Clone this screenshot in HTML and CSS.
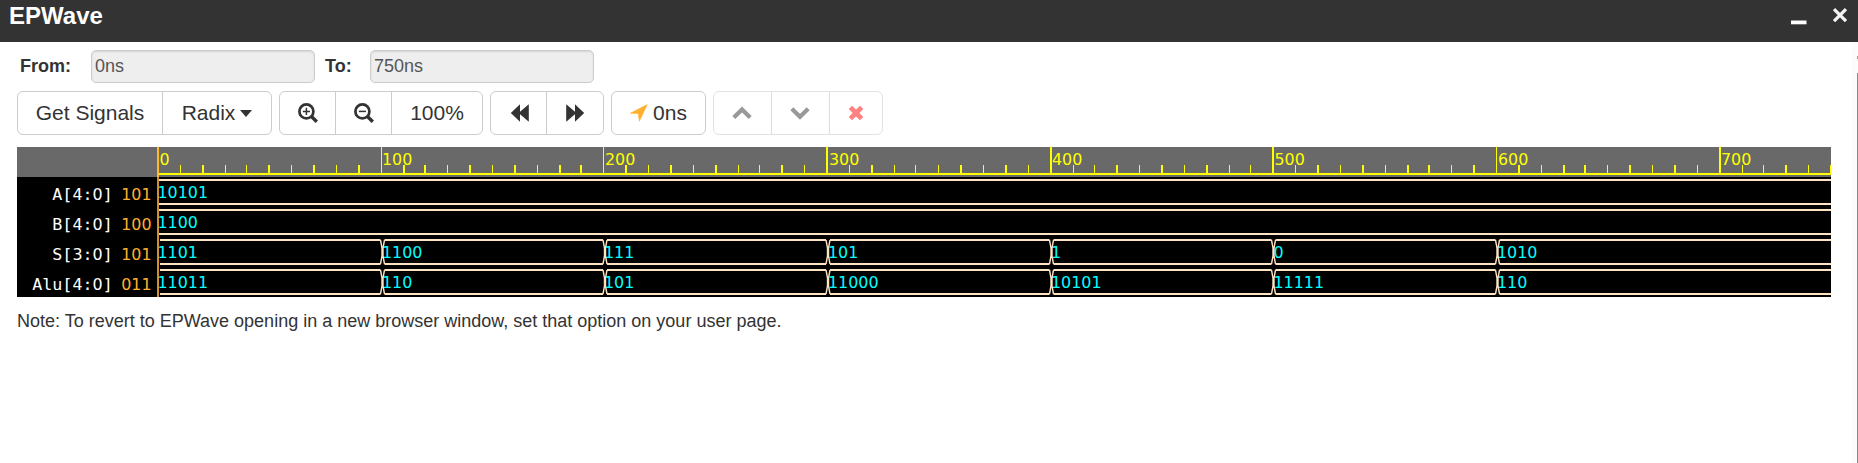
FILE: index.html
```html
<!DOCTYPE html>
<html lang="en">
<head>
<meta charset="utf-8">
<title>EPWave</title>
<link rel="stylesheet" href="styles.css">
</head>
<body>
<header class="titlebar">
  <h1 class="title">EPWave</h1>
  <svg class="window-icons" width="64" height="28" viewBox="0 0 64 28">
    <rect x="1" y="20.5" width="15.5" height="3.8" fill="#fff"/>
    <path d="M44 9.2L56 21.2M56 9.2L44 21.2" stroke="#f4f4f4" stroke-width="3.2"/>
  </svg>
</header>
<main class="content">
  <form class="range">
    <label class="from-label" for="from">From:</label>
    <input id="from" class="field" value="0ns" disabled>
    <label class="to-label" for="to">To:</label>
    <input id="to" class="field" value="750ns" disabled>
  </form>
  <div class="toolbar">
    <div class="group">
      <button class="btn w-signals">Get Signals</button>
      <button class="btn w-radix">Radix<span class="caret"></span></button>
    </div>
    <div class="group">
      <button class="btn w-zin"><svg width="20" height="20" viewBox="0 0 20 20"><circle cx="8.4" cy="8.4" r="7" fill="none" stroke="#333" stroke-width="2.7"/><path d="M13.2 13.2L18.8 18.8" stroke="#333" stroke-width="3.4"/><path d="M4.8 8.4H12M8.4 4.8V12" stroke="#333" stroke-width="1.5"/></svg></button>
      <button class="btn w-zout"><svg width="20" height="20" viewBox="0 0 20 20"><circle cx="8.4" cy="8.4" r="7" fill="none" stroke="#333" stroke-width="2.7"/><path d="M13.2 13.2L18.8 18.8" stroke="#333" stroke-width="3.4"/><path d="M4.8 8.4H12" stroke="#333" stroke-width="1.5"/></svg></button>
      <button class="btn w-pct">100%</button>
    </div>
    <div class="group">
      <button class="btn w-back"><svg class="nudge" width="20" height="18" viewBox="0 0 20 18"><path d="M0.8 9L10 0.3V7.8L18.8 0.3V17.7L10 10.2V17.7Z" fill="#333"/></svg></button>
      <button class="btn w-fwd"><svg class="pull" width="20" height="18" viewBox="0 0 20 18"><path d="M19.2 9L10 0.3V7.8L1.2 0.3V17.7L10 10.2V17.7Z" fill="#333"/></svg></button>
    </div>
    <div class="group">
      <button class="btn w-cursor"><svg class="arrow" width="18" height="18" viewBox="0 0 18 18"><path d="M17.2 0.6L9.4 17.2L8.2 9.4L0.4 9.2Z" fill="#ffb02e" stroke="#ffb02e" stroke-width=".6" stroke-linejoin="round"/></svg>0ns</button>
    </div>
    <div class="group group-disabled">
      <button class="btn w-up"><svg class="pull" width="20" height="14" viewBox="0 0 20 14"><path d="M1.8 11.4L10 3.4L18.2 11.4" fill="none" stroke="#999" stroke-width="4.2"/></svg></button>
      <button class="btn w-down"><svg class="pull" width="20" height="14" viewBox="0 0 20 14"><path d="M1.8 2.8L10 10.8L18.2 2.8" fill="none" stroke="#999" stroke-width="4.2"/></svg></button>
      <button class="btn w-remove"><svg class="pull" width="16" height="16" viewBox="0 0 16 16"><path d="M2.4 2.4L13.6 13.6M13.6 2.4L2.4 13.6" stroke="#ff8080" stroke-width="4.8"/></svg></button>
    </div>
  </div>
  <svg class="waves" id="waves" width="1814" height="150" viewBox="17 147 1814 150"></svg>
  <p class="note">Note: To revert to EPWave opening in a new browser window, set that option on your user page.</p>
</main>
<div class="scrollbar"></div>
<script src="waves.js"></script>
</body>
</html>
```
FILE: styles.css
```css
* { box-sizing: border-box; }
body {
  margin: 0;
  height: 463px;
  overflow: hidden;
  background: #fff;
  color: #333;
  font: 18px/25px "Liberation Sans", Arial, sans-serif;
}
.titlebar {
  display: flex;
  justify-content: space-between;
  height: 42px;
  padding: 0 4px 0 9px;
  background: #333;
  color: #fff;
}
.title { margin: 0; font-size: 24px; line-height: 31px; font-weight: bold; }
.window-icons { display: block; }
.content { padding: 8px 27px 0 17px; }
.range { display: flex; height: 33px; margin: 0; align-items: center; }
.range label { font-weight: bold; line-height: 30px; height: 32px; }
.from-label { width: 74px; padding-left: 3px; }
.to-label { width: 55px; padding-left: 10px; }
.field {
  width: 224px;
  height: 33px;
  margin: 0;
  padding: 0 3px 1px;
  border: 1px solid #ccc;
  border-radius: 5px;
  background: #eee;
  color: #555;
  font: 18px/25px "Liberation Sans", Arial, sans-serif;
  box-shadow: inset 0 1px 2px rgba(0, 0, 0, .1);
}
.toolbar { display: flex; gap: 7px; margin-top: 8px; height: 44px; }
.group { display: flex; border: 1px solid #ccc; border-radius: 6px; }
.group-disabled { border-color: #e3e3e3; }
.btn {
  display: flex;
  align-items: center;
  justify-content: center;
  height: 42px;
  padding: 0;
  border: 0;
  background: none;
  color: #333;
  font: 21px/42px "Liberation Sans", Arial, sans-serif;
  white-space: nowrap;
}
.btn + .btn { border-left: 1px solid #ccc; }
.group-disabled .btn + .btn { border-color: #ddd; }
.w-signals { width: 144px; }
.w-radix { width: 109px; }
.w-zin { width: 55px; }
.w-zout { width: 56px; }
.w-pct { width: 91px; }
.w-back { width: 55px; }
.w-fwd { width: 57px; }
.w-cursor { width: 93px; }
.w-up { width: 57px; }
.w-down { width: 58px; }
.w-remove { width: 53px; }
.nudge { margin-left: 2px; }
.pull { margin-right: 1px; }
.arrow { margin-right: 5px; }
.caret {
  margin-left: 5px;
  border: 6.5px solid transparent;
  border-width: 7px 6.5px 0;
  border-top-color: #333;
}
.waves { display: block; margin-top: 12px; }
.digit { font: 15.9px "DejaVu Sans", sans-serif; }
.letter { font: 16.7px "DejaVu Sans Mono", monospace; }
.note { margin: 12px 0 0; }
.scrollbar {
  position: absolute;
  top: 42px;
  right: 0;
  width: 6px;
  height: 421px;
  background: linear-gradient(#888, #888) 5px 31px / 1px 390px no-repeat,
    linear-gradient(#a98, #a98) 5px 14px / 1px 3px no-repeat, #fcfcfc;
}
```
FILE: waves.js
```js
const out = [];
const rect = (x, y, w, h, fill) =>
  out.push(`<rect x="${x}" y="${y}" width="${w}" height="${h}" fill="${fill}"/>`);

// Digits and letters share a 10px cell but come from different faces.
function text(x, y, value, fill) {
  const runs = value.match(/\d+|\D+/g)
    .map(s => `<tspan class="${/\d/.test(s) ? "digit" : "letter"}">${s}</tspan>`).join("");
  out.push(`<text x="${x}" y="${y}" fill="${fill}">${runs}</text>`);
}

rect(17, 147, 1814, 150, "#000");
rect(17, 147, 1814, 30, "#696969");
rect(158, 173, 1673, 2, "#ff0");

// Minor ticks, by left edge.
const wide = [202, 268, 313, 358, 403, 424, 469, 514, 559, 580, 625, 670, 715, 781, 871, 960, 1005,
  1116, 1161, 1206, 1317, 1362, 1407, 1428, 1473, 1518, 1563, 1584, 1629, 1674, 1785];
const thin = [180, 225, 246, 291, 336, 447, 492, 537, 648, 693, 738, 759, 804, 849, 894, 915, 938,
  983, 1028, 1073, 1094, 1139, 1184, 1229, 1250, 1295, 1340, 1385, 1451, 1541, 1607, 1652, 1697,
  1742, 1763, 1808, 1830];
wide.forEach(x => rect(x, 165, 2, 8, "#ff0"));
thin.forEach(x => rect(x, 165, 1, 8, "#ff0"));

[[381, 1, 382], [603, 1, 605], [826, 2, 829], [1050, 2, 1052], [1272, 2, 1274.5],
  [1496, 1, 1498], [1719, 2, 1721]].forEach(([x, w, tx], i) => {
  rect(x, 147, w, 26, "#ff0");
  text(tx, 165, String((i + 1) * 100), "#ff0");
});
text(159.5, 165, "0", "#ff0");

const edges = [382.5, 605, 828, 1051.5, 1273.5, 1497.5];
const labelX = [157.5, 382, 604, 828, 1051, 1273.5, 1497];
const signals = [
  { name: "A[4:0]", x: 52.3, now: "101", values: ["10101"] },
  { name: "B[4:0]", x: 52.3, now: "100", values: ["1100"] },
  { name: "S[3:0]", x: 52.3, now: "101", values: ["1101", "1100", "111", "101", "1", "0", "1010"] },
  { name: "Alu[4:0]", x: 32.2, now: "011", values: ["11011", "110", "101", "11000", "10101", "11111", "110"] },
];
const line = "#ffe4c4";
signals.forEach((s, row) => {
  const y = 179 + row * 30;
  text(s.x, y + 21, s.name, "#fff");
  text(121.2, y + 21, s.now, "#ffb02e");
  const cuts = s.values.length > 1 ? edges : [];
  let left = cuts.length ? 160 : 158;
  [...cuts, 1834].forEach(c => {
    rect(left, y, c - 2 - left, 2, line);
    rect(left, y + 24, c - 2 - left, 2, line);
    left = c + 2;
  });
  cuts.forEach(c => out.push(
    `<path d="M${c - 2} ${y + 1}L${c - .5} ${y + 9}V${y + 17}L${c - 2} ${y + 25}M${c + 2} ${y + 1}L${c + .5} ${y + 9}V${y + 17}L${c + 2} ${y + 25}" fill="none" stroke="${line}" stroke-width="1.4"/>`));
  s.values.forEach((v, i) => text(labelX[i], y + 19, v, "#0ff"));
});

rect(157, 147, 2, 30, "#ffb92e");
rect(157, 177, 2, 120, "#cf912d");
document.getElementById("waves").innerHTML = out.join("");
```
